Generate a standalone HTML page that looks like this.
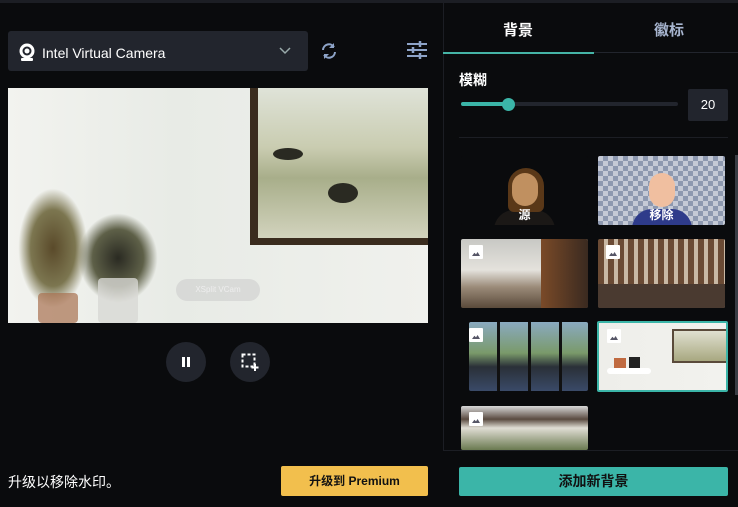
<!DOCTYPE html>
<html><head><meta charset="utf-8"><style>
*{margin:0;padding:0;box-sizing:border-box}
body{width:738px;height:507px;background:#0a0b0d;overflow:hidden;position:relative;font-family:"Liberation Sans","Noto Sans CJK SC",sans-serif;color:#fff}
.a{position:absolute}
.th{position:absolute;width:127px;height:69px;border-radius:2px;overflow:hidden}
.ic{position:absolute;left:8px;top:6px;width:14px;height:14px;background:#fff;border-radius:1px}
.ic:after{content:"";position:absolute;left:3px;bottom:3px;width:8px;height:4px;background:#556;clip-path:polygon(0 100%,30% 20%,50% 60%,70% 0,100% 100%)}
</style></head><body>
<div class="a" style="left:0;top:0;width:738px;height:3px;background:#1c1e24"></div>
<div class="a" style="left:8px;top:31px;width:300px;height:40px;background:#22252d;border-radius:3px"></div>
<svg class="a" style="left:18px;top:42px" width="18" height="20" viewBox="0 0 18 20"><circle cx="9" cy="9" r="7.5" fill="#fff"/><circle cx="9" cy="9" r="4.5" fill="#22252d"/><circle cx="9" cy="9" r="2.5" fill="#fff"/><rect x="3" y="16" width="12" height="3" rx="1" fill="#fff"/></svg>
<div class="a" style="left:42px;top:45px;font-size:14px;color:#fff">Intel Virtual Camera</div>
<svg class="a" style="left:279px;top:47px" width="12" height="8"><path d="M1 1l5 5 5-5" stroke="#9aa" stroke-width="1.5" fill="none"/></svg>
<svg class="a" style="left:320px;top:42px" width="18" height="18" viewBox="0 0 18 18"><path d="M3 8a6 6 0 0 1 11-3M15 10a6 6 0 0 1-11 3" stroke="#8ea4c8" stroke-width="2" fill="none"/><path d="M14 1v5h-5z M4 17v-5h5z" fill="#8ea4c8"/></svg>
<svg class="a" style="left:406px;top:41px" width="22" height="18"><g stroke="#8ea4c8" stroke-width="2"><path d="M1 3h20M1 9h20M1 15h20"/></g><g stroke="#8ea4c8" stroke-width="2.5"><path d="M14 0v6M7 6v6M14 12v6"/></g></svg>
<div class="a" style="left:8px;top:88px;width:420px;height:235px;background:linear-gradient(90deg,#f2f3ef,#e8ebe6 40%,#f0f1ed);overflow:hidden">
 <div class="a" style="left:242px;top:0;width:178px;height:157px;background:#3a2c1e"></div>
 <div class="a" style="left:250px;top:0;width:170px;height:150px;background:linear-gradient(180deg,#dfe3d8,#c9ccb0 40%,#a8ae8a 60%,#d2d3bd)"></div>
 <div class="a" style="left:265px;top:60px;width:30px;height:12px;background:#2a2a22;border-radius:50%"></div>
 <div class="a" style="left:320px;top:95px;width:30px;height:20px;background:#2a2a22;border-radius:50%"></div>
 <div class="a" style="left:10px;top:100px;width:70px;height:120px;background:radial-gradient(#5a4a2a,#7c7650 45%,transparent 70%)"></div>
 <div class="a" style="left:70px;top:125px;width:80px;height:90px;background:radial-gradient(#2a2a22,#5e6048 45%,transparent 70%)"></div>
 <div class="a" style="left:30px;top:205px;width:40px;height:30px;background:#a87050;border-radius:4px;opacity:.7"></div>
 <div class="a" style="left:90px;top:190px;width:40px;height:45px;background:#d8d8d4;border-radius:4px;opacity:.8"></div>
 <div class="a" style="left:168px;top:191px;width:84px;height:22px;border-radius:11px;background:rgba(200,200,200,.5);font-size:8px;color:#eee;line-height:22px;text-align:center">XSplit VCam</div>
</div>
<div class="a" style="left:166px;top:342px;width:40px;height:40px;border-radius:50%;background:#22252d"></div>
<div class="a" style="left:182px;top:357px;width:3px;height:10px;background:#fff"></div><div class="a" style="left:187px;top:357px;width:3px;height:10px;background:#fff"></div>
<div class="a" style="left:230px;top:342px;width:40px;height:40px;border-radius:50%;background:#22252d"></div>
<svg class="a" style="left:241px;top:353px" width="19" height="19"><rect x="1.5" y="1.5" width="12" height="12" stroke="#fff" stroke-width="2" stroke-dasharray="3 2" fill="none"/><path d="M14 11v7M10.5 14.5h7" stroke="#fff" stroke-width="2"/></svg>
<div class="a" style="left:8px;top:472px;font-size:14px">升级以移除水印。</div>
<div class="a" style="left:281px;top:466px;width:147px;height:30px;background:#f2bf4d;border-radius:2px;color:#111;font-size:12px;font-weight:bold;text-align:center;line-height:30px">升级到 Premium</div>
<div class="a" style="left:443px;top:3px;width:1px;height:504px;background:#1c1e24"></div>
<div class="a" style="left:503px;top:19px;font-size:15px;font-weight:bold">背景</div>
<div class="a" style="left:654px;top:19px;font-size:15px;font-weight:bold;color:#a8b6d0">徽标</div>
<div class="a" style="left:443px;top:52px;width:295px;height:1px;background:#22252d"></div>
<div class="a" style="left:443px;top:52px;width:151px;height:2px;background:#45b4a6"></div>
<div class="a" style="left:459px;top:70px;font-size:14px;font-weight:bold">模糊</div>
<div class="a" style="left:461px;top:102px;width:217px;height:4px;border-radius:2px;background:#22252d"></div>
<div class="a" style="left:461px;top:102px;width:48px;height:4px;border-radius:2px;background:#3bb5a8"></div>
<div class="a" style="left:502px;top:98px;width:13px;height:13px;border-radius:50%;background:#3bb5a8"></div>
<div class="a" style="left:688px;top:89px;width:40px;height:32px;background:#22252d;border-radius:2px;font-size:13px;text-align:center;line-height:32px">20</div>
<div class="a" style="left:459px;top:137px;width:269px;height:1px;background:#1c1e24"></div>
<div class="th" style="left:461px;top:156px;background:#0a0b0d">
 <div class="a" style="left:33px;top:54px;width:61px;height:20px;border-radius:30px 30px 0 0;background:#1b1816"></div>
 <div class="a" style="left:47px;top:12px;width:36px;height:44px;border-radius:18px 18px 6px 6px;background:#5a3818"></div>
 <div class="a" style="left:51px;top:17px;width:26px;height:33px;border-radius:13px;background:#c09060"></div>
 <div class="a" style="left:0;top:50px;width:127px;text-align:center;font-size:12px;font-weight:bold">源</div>
</div>
<div class="th" style="left:598px;top:156px;background:repeating-conic-gradient(#8e99b0 0 25%,#c5cad6 0 50%) 0 0/10px 10px">
 <div class="a" style="left:34px;top:53px;width:60px;height:20px;border-radius:30px 30px 0 0;background:#2e3b8a"></div>
 <div class="a" style="left:51px;top:17px;width:26px;height:34px;border-radius:13px;background:#f0bfa0"></div>
 <div class="a" style="left:0;top:50px;width:127px;text-align:center;font-size:12px;font-weight:bold">移除</div>
</div>
<div class="th" style="left:461px;top:239px;background:linear-gradient(180deg,#c8c8c4,#e4e2dc 45%,#9a8a78 70%,#5a4a3a);"><div class="a" style="left:80px;top:0;width:47px;height:69px;background:linear-gradient(90deg,#7a4a28,#3a2a20)"></div><div class="ic"></div></div>
<div class="th" style="left:598px;top:239px;background:repeating-linear-gradient(90deg,#6a4a34 0 6px,#c8b8a4 6px 10px);"><div class="a" style="left:0;top:45px;width:127px;height:24px;background:#4a3a30"></div><div class="ic"></div></div>
<div class="th" style="left:469px;top:322px;width:119px;background:linear-gradient(180deg,#8aaac0,#7a9a6a 45%,#2a3038 65%,#3a4a68);"><div class="a" style="left:0;top:0;width:119px;height:69px;background:repeating-linear-gradient(90deg,transparent 0 28px,#111 28px 31px)"></div><div class="ic" style="left:0"></div></div>
<div class="th" style="left:597px;top:321px;width:131px;height:71px;border:2px solid #3bb5a8;background:linear-gradient(90deg,#eeeeea,#f2f2ee)">
 <div class="a" style="left:73px;top:6px;width:56px;height:34px;background:linear-gradient(180deg,#e0e0d0,#a8a880);border:2px solid #5a4a3a"></div>
 <div class="a" style="left:8px;top:45px;width:44px;height:6px;background:#fff;border-radius:3px"></div>
 <div class="a" style="left:15px;top:35px;width:12px;height:10px;background:#c06a40"></div>
 <div class="a" style="left:30px;top:34px;width:11px;height:11px;background:#222"></div>
 <div class="ic"></div></div>
<div class="th" style="left:461px;top:406px;height:44px;background:linear-gradient(180deg,#d8d8d8,#5a4a40 30%,#e0ddd4 50%,#6a7a50)"><div class="ic"></div></div>
<div class="a" style="left:735px;top:155px;width:3px;height:240px;background:#3a3d45"></div>
<div class="a" style="left:443px;top:450px;width:295px;height:57px;background:#0a0b0d;border-top:1px solid #1c1e24"></div>
<div class="a" style="left:459px;top:467px;width:269px;height:29px;background:#3bb5a8;border-radius:2px;color:#111;font-size:14px;font-weight:bold;text-align:center;line-height:29px">添加新背景</div>
</body></html>
